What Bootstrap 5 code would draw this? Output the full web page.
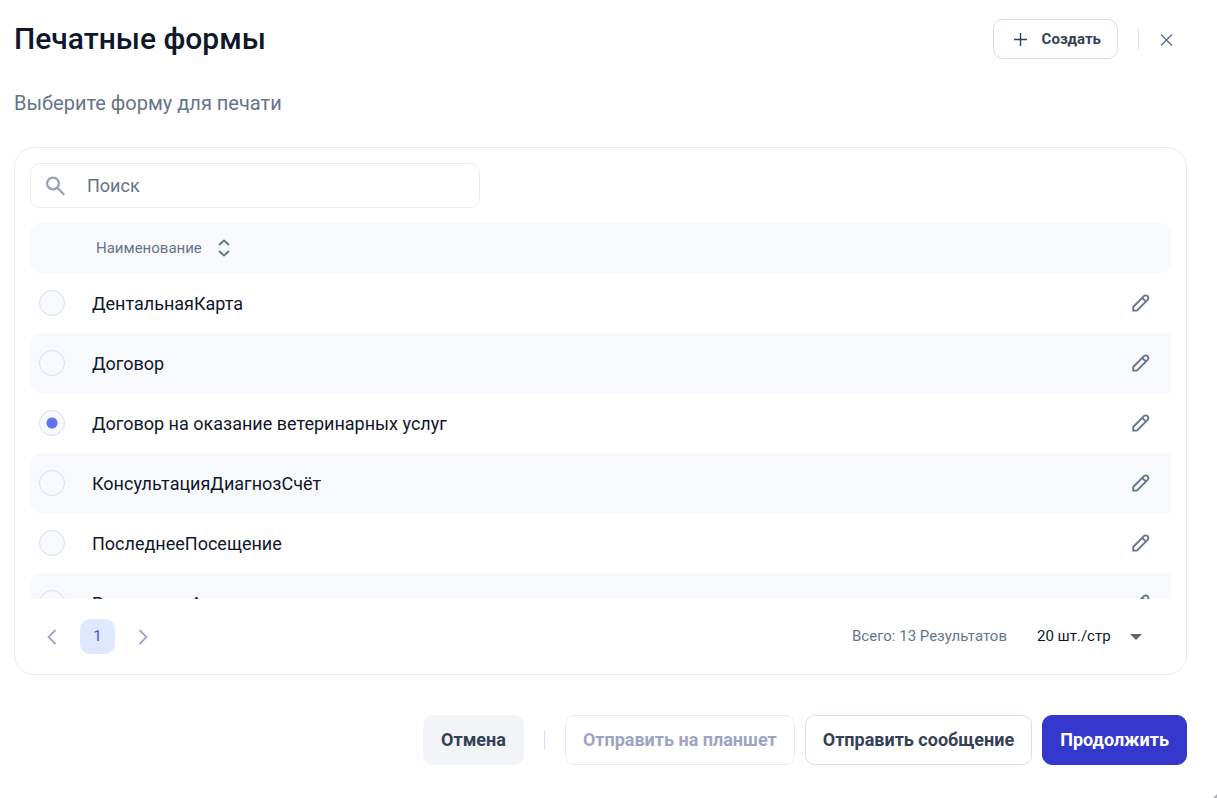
<!DOCTYPE html>
<html lang="ru">
<head>
<meta charset="utf-8">
<meta name="viewport" content="width=device-width, initial-scale=1">
<title>Печатные формы</title>
<link href="https://cdn.jsdelivr.net/npm/bootstrap@5.3.0/dist/css/bootstrap.min.css" rel="stylesheet">
<style>
  :root {
    --ink: #0f172a;
    --ink-soft: #334155;
    --slate: #64748b;
    --muted: #a0a4c4;
    --line: #d9dcf2;
    --line-light: #ebebf3;
    --stripe: #f8f9fd;
    --brand: #3538cd;
  }
  body { font-family: Roboto, "Liberation Sans", sans-serif; color: var(--ink); background: #fff; }
  .dialog-page { height: 100vh; min-height: 560px; padding: 19px 30px 33px 14px; }
  .dialog-title { font-size: 30px; line-height: 40px; font-weight: 500; }
  .dialog-subtitle { font-size: 20px; line-height: 24px; color: var(--slate); margin-top: 32px; }
  .divider { width: 1px; height: 20px; background: var(--line); margin: 0 20px; }
  .btn { border-radius: 10px; font-weight: 700; }
  .btn-outline-soft { --bs-btn-color: var(--ink-soft); --bs-btn-bg: #fff; --bs-btn-border-color: var(--line);
    --bs-btn-hover-bg: var(--stripe); --bs-btn-hover-border-color: var(--line); --bs-btn-hover-color: var(--ink-soft);
    --bs-btn-disabled-color: var(--muted); --bs-btn-disabled-bg: #fff; --bs-btn-disabled-border-color: var(--line-light); --bs-btn-disabled-opacity: 1; }
  .btn-quiet { --bs-btn-color: var(--ink-soft); --bs-btn-bg: #f2f4f8; --bs-btn-border-color: #f2f4f8;
    --bs-btn-hover-bg: #e8ebf2; --bs-btn-hover-border-color: #e8ebf2; }
  .btn-brand { --bs-btn-color: #fff; --bs-btn-bg: var(--brand); --bs-btn-border-color: var(--brand);
    --bs-btn-hover-color: #fff; --bs-btn-hover-bg: #2d31a6; --bs-btn-hover-border-color: #2d31a6; }
  .btn-create { height: 40px; padding: 0 16px; font-size: 15px; }
  .btn-action { height: 50px; padding: 0 17px; font-size: 18px; line-height: 24px; }
  .btn-plain { border: 0; padding: 0; background: none; color: var(--slate); display: inline-flex; align-items: center; justify-content: center; }
  .btn-close-dialog { width: 41px; height: 40px; }
  .header-tools .divider { margin-right: 7px; }
  .forms-card { border: 1px solid var(--line-light); border-radius: 20px; padding: 15px 15px 0; margin-top: 32px; min-height: 0; }
  .search-box { max-width: 450px; height: 45px; border: 1px solid var(--line-light); border-radius: 10px; padding: 0 14px; }
  .search-box svg { color: #94a3b8; }
  .search-box input { font-size: 18px; color: var(--ink); padding: 0; margin-left: 20px; }
  .search-box input::placeholder { color: var(--slate); opacity: 1; }
  .table-scroll { overflow-y: auto; scrollbar-width: none; margin-top: 15px; min-height: 0; }
  .table-scroll::-webkit-scrollbar { display: none; }
  .forms-table { width: 100%; border-collapse: separate; border-spacing: 0; }
  .forms-table thead th { position: sticky; top: 0; z-index: 1; height: 50px; padding: 0; background: var(--stripe); font-size: 15px; font-weight: 400; color: var(--slate); }
  .forms-table th:first-child { width: 62px; border-radius: 10px 0 0 10px; }
  .forms-table th:last-child { width: 60px; border-radius: 0 10px 10px 0; }
  .forms-table td { height: 60px; padding: 0; font-size: 18px; vertical-align: middle; }
  .forms-table tr:nth-child(even) td { background: var(--stripe); }
  .forms-table td:first-child { border-radius: 10px 0 0 10px; padding-left: 9px; }
  .btn-edit { display: flex; width: 100%; }
  .form-check-input.row-radio { width: 26px; height: 26px; margin: 0; display: block; background-color: var(--stripe); border: 1px solid var(--line); }
  .form-check-input.row-radio:checked { background-color: var(--stripe); background-image: radial-gradient(circle, #6172f3 5px, transparent 6px); }
  .table-footer { height: 75px; font-size: 15px; color: var(--slate); padding: 0 29px 0 5px; }
  .page-current { width: 35px; height: 35px; border-radius: 10px; background: #dfe8ff; color: #444ce7; margin: 0 11px; }
  .page-step { width: 34px; height: 35px; color: var(--muted); }
  .page-size { width: 105px; font-size: 15px; color: var(--ink); border: 0; appearance: none; padding: 0; margin-left: 30px;
    background: url("data:image/svg+xml,%3Csvg xmlns='http://www.w3.org/2000/svg' viewBox='0 0 12 6'%3E%3Cpath d='M0 0h12L6 6z' fill='%23666'/%3E%3C/svg%3E") right center / 12px 6px no-repeat; }
  .dialog-actions { margin-top: 40px; }
  .action-group { gap: 10px; }
  .resize-grip { position: fixed; right: 0; bottom: 0; }
</style>
</head>
<body>
<svg class="d-none" aria-hidden="true">
  <symbol id="pencil" viewBox="0 0 20 20">
    <path d="M2.2 17.6V14L12.9 3.1a2.6 2.6 0 0 1 3.7 3.7L5.9 17.6ZM11.2 4.9l3.7 3.7" fill="none" stroke="currentColor" stroke-width="1.9" stroke-linejoin="round"/>
  </symbol>
</svg>
<main class="dialog-page d-flex flex-column">
  <header class="header-tools d-flex align-items-center">
    <h1 class="dialog-title mb-0 me-auto">Печатные формы</h1>
    <button type="button" class="btn btn-outline-soft btn-create d-flex align-items-center">
      <svg class="me-2" width="20" height="20" viewBox="0 0 20 20" fill="none" stroke="currentColor" stroke-width="1.4" aria-hidden="true"><path d="M10.5 4v13M4 10.5h13"/></svg>
      <span class="ms-1">Создать</span>
    </button>
    <span class="divider"></span>
    <button type="button" class="btn-plain btn-close-dialog" aria-label="Закрыть">
      <svg width="13" height="13" viewBox="0 0 13 13" fill="none" stroke="currentColor" stroke-width="1.5" stroke-linecap="round"><path d="m1.500 2 10 10M11.500 2 1.500 12"/></svg>
    </button>
  </header>
  <p class="dialog-subtitle mb-0">Выберите форму для печати</p>

  <section class="forms-card d-flex flex-column flex-grow-1">
    <div class="search-box d-flex align-items-center flex-shrink-0 w-100">
      <svg class="flex-shrink-0" width="22" height="22" viewBox="0 0 22 22" fill="none" stroke="currentColor" stroke-width="2.3" aria-hidden="true"><circle cx="8" cy="8.500" r="5.900"/><path d="m12.500 13 6.700 6.700"/></svg>
      <input type="search" class="form-control border-0 shadow-none bg-transparent" placeholder="Поиск" aria-label="Поиск">
    </div>

    <div class="table-scroll flex-grow-1">
      <table class="forms-table">
        <thead>
          <tr>
            <th></th>
            <th scope="col"><button type="button" class="btn-plain ms-1">Наименование
              <svg class="ms-3" width="12" height="18" viewBox="0 0 12 18" fill="none" stroke="currentColor" stroke-width="1.8" stroke-linecap="round" stroke-linejoin="round" aria-hidden="true"><path d="m1.500 5.500 4.500-4 4.500 4M1.500 12.500l4.500 4 4.500-4"/></svg></button></th>
            <th></th>
          </tr>
        </thead>
        <tbody>
          <tr><td><input class="form-check-input row-radio" type="radio" name="form" id="f1"></td><td><label for="f1">ДентальнаяКарта</label></td><td><button type="button" class="btn-plain btn-edit" aria-label="Изменить"><svg width="20" height="20"><use href="#pencil"/></svg></button></td></tr>
          <tr><td><input class="form-check-input row-radio" type="radio" name="form" id="f2"></td><td><label for="f2">Договор</label></td><td><button type="button" class="btn-plain btn-edit" aria-label="Изменить"><svg width="20" height="20"><use href="#pencil"/></svg></button></td></tr>
          <tr><td><input class="form-check-input row-radio" type="radio" name="form" id="f3" checked></td><td><label for="f3">Договор на оказание ветеринарных услуг</label></td><td><button type="button" class="btn-plain btn-edit" aria-label="Изменить"><svg width="20" height="20"><use href="#pencil"/></svg></button></td></tr>
          <tr><td><input class="form-check-input row-radio" type="radio" name="form" id="f4"></td><td><label for="f4">КонсультацияДиагнозСчёт</label></td><td><button type="button" class="btn-plain btn-edit" aria-label="Изменить"><svg width="20" height="20"><use href="#pencil"/></svg></button></td></tr>
          <tr><td><input class="form-check-input row-radio" type="radio" name="form" id="f5"></td><td><label for="f5">ПоследнееПосещение</label></td><td><button type="button" class="btn-plain btn-edit" aria-label="Изменить"><svg width="20" height="20"><use href="#pencil"/></svg></button></td></tr>
          <tr><td><input class="form-check-input row-radio" type="radio" name="form" id="f6"></td><td><label for="f6">РезультатыАнализов</label></td><td><button type="button" class="btn-plain btn-edit" aria-label="Изменить"><svg width="20" height="20"><use href="#pencil"/></svg></button></td></tr>
        </tbody>
      </table>
    </div>

    <div class="table-footer d-flex align-items-center flex-shrink-0">
      <nav class="d-flex align-items-center me-auto" aria-label="Страницы">
        <button type="button" class="btn-plain page-step" aria-label="Назад"><svg width="10" height="16" viewBox="0 0 10 16" fill="none" stroke="currentColor" stroke-width="1.8"><path d="M8.500 1 1.500 8l7 7"/></svg></button>
        <button type="button" class="btn-plain page-current" aria-current="page">1</button>
        <button type="button" class="btn-plain page-step" aria-label="Вперёд"><svg width="10" height="16" viewBox="0 0 10 16" fill="none" stroke="currentColor" stroke-width="1.8"><path d="m1.500 1 7 7-7 7"/></svg></button>
      </nav>
      <span>Всего: 13 Результатов</span>
      <select class="page-size" aria-label="Строк на странице"><option>20 шт./стр</option></select>
    </div>
  </section>

  <footer class="dialog-actions d-flex justify-content-end align-items-center">
    <button type="button" class="btn btn-quiet btn-action">Отмена</button>
    <span class="divider"></span>
    <div class="action-group d-flex">
      <button type="button" class="btn btn-outline-soft btn-action" disabled>Отправить на планшет</button>
      <button type="button" class="btn btn-outline-soft btn-action">Отправить сообщение</button>
      <button type="button" class="btn btn-brand btn-action">Продолжить</button>
    </div>
  </footer>
</main>
<svg class="resize-grip" width="4" height="4" viewBox="0 0 4 4" aria-hidden="true"><path d="M4 0v4H0z" fill="#b0b0c4"/></svg>
<script src="https://cdn.jsdelivr.net/npm/bootstrap@5.3.0/dist/js/bootstrap.bundle.min.js"></script>
</body>
</html>
